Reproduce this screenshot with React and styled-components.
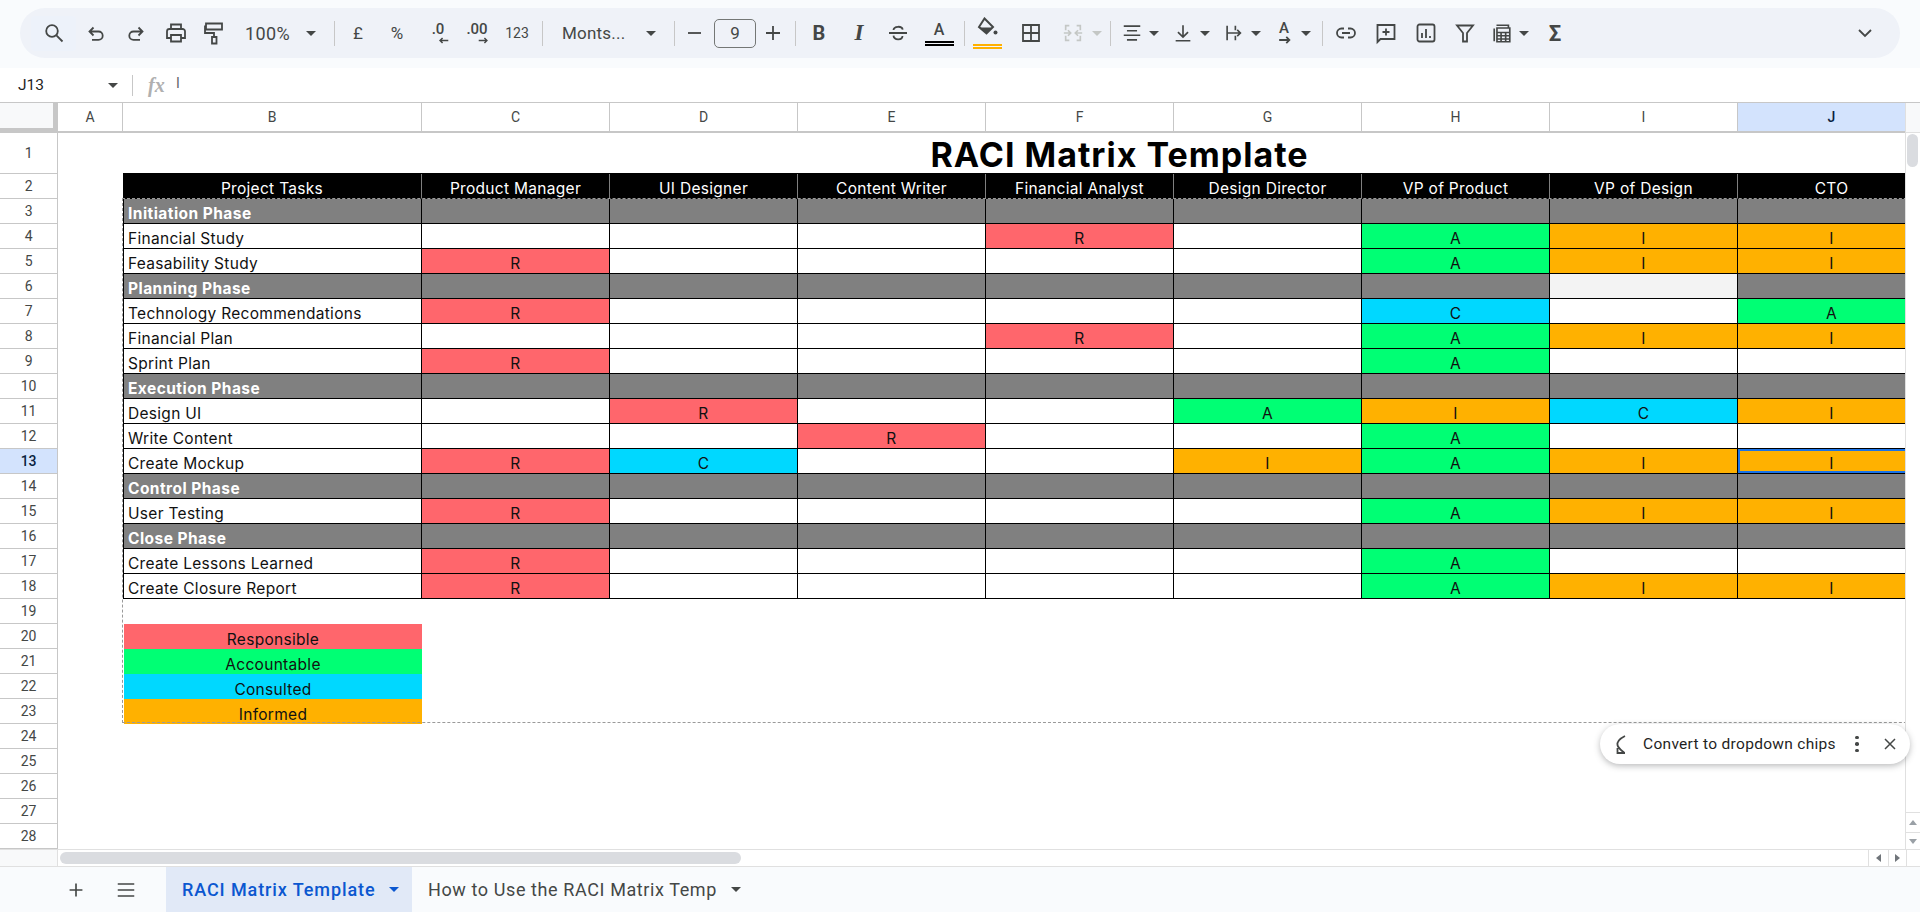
import React from 'react'
import styled, { createGlobalStyle } from 'styled-components'

const GlobalStyle = createGlobalStyle`
  html, body { margin: 0; padding: 0; background: #fff; }
  * { box-sizing: border-box; }
`

const UI_FONT = `Roboto, "Liberation Sans", sans-serif`
const SHEET_FONT = `Inter, "Liberation Sans", sans-serif`
const INK = '#444746'

const Page = styled.div`
  position: relative;
  width: 1920px;
  height: 912px;
  overflow: hidden;
  display: flex;
  flex-direction: column;
  font-family: ${UI_FONT};
  background: #fff;
`

/* toolbar */
const ToolbarBand = styled.div`
  height: 68px;
  flex: none;
  background: #f9fbfd;
  padding: 8px 20px 10px;
`
const Pill = styled.div`
  height: 50px;
  border-radius: 25px;
  background: #eff2f8;
  padding-left: 11px;
  padding-right: 15px;
  display: flex;
  align-items: center;
  color: ${INK};
`
const Tool = styled.div`
  flex: none;
  width: ${p => p.$w}px;
  height: 36px;
  display: flex;
  align-items: center;
  justify-content: center;
  font-size: ${p => p.$size || 15}px;
  font-weight: ${p => p.$weight || 400};
  color: ${INK};
`
const SearchTool = styled(Tool)`
  height: 35px;
  background: #edf2fa;
  border-radius: 4px;
`
const Split = styled.div`
  flex: none;
  width: ${p => p.$w}px;
  padding-left: ${p => p.$pl || 0}px;
  display: flex;
  align-items: center;
  gap: ${p => p.$gap || 6}px;
`
const Select = styled.div`
  flex: none;
  width: ${p => p.$w}px;
  padding: 0 12px 0 ${p => p.$pl}px;
  display: flex;
  align-items: center;
  justify-content: space-between;
  font-size: ${p => p.$size}px;
  letter-spacing: ${p => p.$track || 0}px;
  color: ${INK};
`
const Sep = styled.div`
  flex: none;
  width: ${p => p.$w}px;
  height: 25px;
  display: flex;
  justify-content: center;
  &::after {
    content: '';
    width: 1px;
    height: 25px;
    background: #c7c7c7;
  }
`
const Caret = styled.span`
  flex: none;
  width: 0;
  height: 0;
  border-left: 5px solid transparent;
  border-right: 5px solid transparent;
  border-top: 5px solid ${p => p.$color || INK};
`
const Ico = styled.svg.attrs(p => ({ viewBox: '0 0 24 24', width: p.$s || 24, height: p.$s || 24 }))`
  flex: none;
  display: block;
  fill: none;
  stroke: ${p => p.$color || INK};
  stroke-width: ${p => p.$sw || 1.8};
`
const SizeItem = styled.div`
  flex: none;
  width: 50px;
  padding-left: 6px;
`
const SizeBox = styled.div`
  width: 42px;
  height: 29px;
  border: 1px solid #747775;
  border-radius: 5px;
  display: flex;
  align-items: center;
  justify-content: center;
  font-size: 17px;
  color: ${INK};
`
const Decimal = styled.div`
  display: flex;
  flex-direction: column;
  align-items: flex-end;
  font-size: 15px;
  font-weight: 500;
  line-height: 13px;
  svg {
    margin-right: ${p => p.$nudge || 0}px;
    margin-top: 1px;
  }
`
const BarStack = styled.div`
  display: flex;
  flex-direction: column;
  align-items: center;
  width: 29px;
`
const AGlyph = styled.span`
  font-size: 16px;
  font-weight: 500;
  line-height: 17px;
  height: 17px;
`
const ColorBar = styled.div`
  width: 29px;
  height: 5px;
  margin-top: 3px;
  border-top: 2px solid ${p => p.$color};
  border-bottom: 2px solid ${p => p.$color};
  background: #f4f6fa;
`
const SerifItalic = styled.span`
  font-family: "Liberation Serif", serif;
  font-style: italic;
  font-weight: 700;
  font-size: 23px;
`
const RotateStack = styled.div`
  display: flex;
  flex-direction: column;
  align-items: center;
  width: 22px;
  font-size: 15px;
  font-weight: 500;
  line-height: 13px;
  svg { margin-top: 1px; }
`
const Sigma = styled.span`
  font-size: 22px;
  font-weight: 700;
`
const PushRight = styled.div`
  margin-left: auto;
  width: 40px;
  display: flex;
  justify-content: center;
`

/* formula bar */
const FormulaBar = styled.div`
  height: 35px;
  flex: none;
  border-bottom: 1px solid #c7c7c7;
  display: flex;
  align-items: center;
  padding-left: 18px;
`
const NameBox = styled.div`
  width: 100px;
  display: flex;
  align-items: center;
  justify-content: space-between;
  font-size: 15.5px;
  color: #1f1f1f;
`
const FormulaSep = styled.div`
  width: 1px;
  height: 21px;
  margin-left: 14px;
  background: #c7c7c7;
`
const Fx = styled.span`
  margin-left: 15px;
  width: 28px;
  font-family: "Liberation Serif", serif;
  font-style: italic;
  font-weight: 700;
  font-size: 20px;
  color: #b0b0b0;
`
const FormulaValue = styled.span`
  font-size: 14px;
  color: #5f6368;
  margin-top: -4px;
`

/* sheet */
const SheetBody = styled.div`
  height: 746px;
  flex: none;
  display: flex;
`
const GridPane = styled.div`
  position: relative;
  width: 1905px;
  height: 746px;
  overflow: hidden;
`
const COLUMNS = '58px 65px 299px repeat(8, 188px)'
const ColHeadRow = styled.div`
  display: grid;
  grid-template-columns: ${COLUMNS};
  height: 30px;
`
const Corner = styled.div`
  background: #f8f9fa;
  border-right: 5px solid #c7c7c7;
  border-bottom: 5px solid #c7c7c7;
`
const ColHead = styled.div`
  display: flex;
  align-items: center;
  justify-content: center;
  font-size: 14px;
  padding-bottom: 1px;
  background: ${p => (p.$active ? '#d3e3fd' : '#fff')};
  color: ${p => (p.$active ? '#0b1f3f' : INK)};
  font-weight: ${p => (p.$active ? 500 : 400)};
  border-right: 1px solid #c7c7c7;
  border-bottom: 2px solid #c7c7c7;
`
const Row = styled.div`
  display: grid;
  grid-template-columns: ${COLUMNS};
  height: ${p => p.$h || 25}px;
`
const RowHead = styled.div`
  display: flex;
  align-items: center;
  justify-content: center;
  font-size: 14px;
  letter-spacing: -0.2px;
  background: ${p => (p.$active ? '#d3e3fd' : '#fff')};
  color: ${p => (p.$active ? '#0b1f3f' : INK)};
  font-weight: ${p => (p.$active ? 500 : 400)};
  border-right: 1px solid #c7c7c7;
  border-bottom: 1px solid #c7c7c7;
`
const TitleCell = styled.div`
  grid-column: 3 / -1;
  padding: 3px 0 0 190px;
  text-align: center;
  font-family: ${SHEET_FONT};
  font-weight: 700;
  font-size: 34px;
  line-height: 37px;
  letter-spacing: 1px;
  color: #000;
  border-bottom: 1px solid #000;
`
const BlankA = styled.div``
const Cell = styled.div`
  display: flex;
  align-items: flex-end;
  justify-content: center;
  font-family: ${SHEET_FONT};
  font-size: 15.5px;
  line-height: 19px;
  letter-spacing: 0.3px;
  color: #111;
  background: ${p => p.$fill || '#fff'};
  border-right: 1px solid #000;
  border-bottom: 1px solid #000;
`
const TaskCell = styled(Cell)`
  justify-content: flex-start;
  padding-left: 4px;
  border-left: 1px solid #000;
`
const HeadCell = styled(Cell)`
  background: #000;
  color: #fff;
  border-right: 1px solid #7f7f7f;
`
const PhaseCell = styled(Cell)`
  background: ${p => p.$fill || '#808080'};
`
const PhaseName = styled(TaskCell)`
  background: #808080;
  color: #fff;
  font-weight: 700;
  letter-spacing: 0.45px;
`
const SelectedCell = styled(Cell)`
  box-shadow: inset 0 0 0 2px #1a73e8;
`
const LegendCell = styled.div`
  margin-left: 1px;
  display: flex;
  align-items: flex-end;
  justify-content: center;
  font-family: ${SHEET_FONT};
  font-size: 15.5px;
  line-height: 19px;
  letter-spacing: 0.3px;
  color: #111;
  background: ${p => p.$fill};
`
const CopyAnts = styled.div`
  position: absolute;
  left: 122px;
  top: 95px;
  width: 1900px;
  height: 525px;
  border: 1px dashed #9a9a9a;
  pointer-events: none;
`

/* scrollbars */
const VScroll = styled.div`
  width: 15px;
  border-left: 1px solid #e0e0e0;
  background: #fff;
  display: flex;
  flex-direction: column;
`
const VTop = styled.div`
  height: 30px;
  flex: none;
  background: #f8f9fa;
  border-bottom: 1px solid #e0e0e0;
`
const VThumb = styled.div`
  width: 11px;
  height: 33px;
  margin: 1px 0 0 1px;
  border-radius: 6px;
  background: #dadce0;
`
const VBottom = styled.div`
  margin-top: auto;
`
const ArrowBox = styled.div`
  height: ${p => p.$h}px;
  border-top: 1px solid #e0e0e0;
  display: flex;
  align-items: center;
  justify-content: center;
`
const Tri = styled.span`
  width: 0;
  height: 0;
  border-style: solid;
  border-color: transparent;
  border-width: 4px;
  ${p => p.$dir === 'up' && 'border-bottom: 5px solid #9aa0a6; border-top-width: 0;'}
  ${p => p.$dir === 'down' && 'border-top: 5px solid #9aa0a6; border-bottom-width: 0;'}
  ${p => p.$dir === 'left' && 'border-right: 5px solid #70757a; border-left-width: 0;'}
  ${p => p.$dir === 'right' && 'border-left: 5px solid #70757a; border-right-width: 0;'}
`
const HScroll = styled.div`
  height: 17px;
  flex: none;
  border-top: 1px solid #e0e0e0;
  display: flex;
`
const HLeft = styled.div`
  width: 58px;
  flex: none;
  background: #f8f9fa;
  border-right: 1px solid #e0e0e0;
`
const HThumb = styled.div`
  width: 681px;
  height: 12px;
  margin: 2px 0 0 2px;
  border-radius: 6px;
  background: #dadce0;
`
const HArrow = styled.div`
  width: ${p => p.$w}px;
  flex: none;
  border-left: 1px solid #e0e0e0;
  display: flex;
  align-items: center;
  justify-content: center;
  margin-left: ${p => (p.$first ? 'auto' : 0)};
`

/* sheet tabs */
const TabBar = styled.div`
  flex: 1;
  border-top: 1px solid #e0e0e0;
  background: #f9fbfd;
  display: flex;
  align-items: stretch;
  padding-left: 60px;
`
const TabIcon = styled.div`
  width: ${p => p.$w}px;
  margin-right: ${p => p.$mr || 0}px;
  flex: none;
  display: flex;
  align-items: center;
  justify-content: center;
`
const Tab = styled.div`
  width: ${p => p.$w}px;
  flex: none;
  padding-left: 16px;
  display: flex;
  align-items: center;
  gap: 14px;
  font-size: 18px;
  font-weight: ${p => (p.$active ? 500 : 400)};
  letter-spacing: ${p => (p.$active ? 0.9 : 0.6)}px;
  color: ${p => (p.$active ? '#0b57d0' : INK)};
  background: ${p => (p.$active ? '#e1e9f7' : 'transparent')};
`

/* popup chip */
const Toast = styled.div`
  position: absolute;
  left: 1600px;
  top: 724px;
  width: 310px;
  height: 40px;
  border-radius: 20px;
  background: #fff;
  box-shadow: 0 2px 6px rgba(60, 64, 67, 0.35);
  display: flex;
  align-items: center;
  padding-left: 9px;
  font-size: 15.5px;
  color: #1f1f1f;
`
const ToastText = styled.span`
  flex: none;
  margin-left: 10px;
  width: 212px;
  letter-spacing: 0.3px;
  white-space: nowrap;
`
const Dots = styled.div`
  flex: none;
  display: flex;
  flex-direction: column;
  gap: 3px;
  width: 4px;
  span {
    width: 3.5px;
    height: 3.5px;
    border-radius: 50%;
    background: ${INK};
  }
`
const ToastClose = styled.div`
  flex: none;
  margin-left: 21px;
  width: 20px;
`

const icons = {
  search: <><circle cx="10" cy="10" r="5.8" /><path d="M14.4 14.4 20.5 20.5" /></>,
  undo: <path d="M9.5 6.5 5.5 10.5l4 4M5.5 10.5h9a4.2 4.2 0 0 1 0 8.4H8" />,
  redo: <path d="M14.5 6.5l4 4-4 4M18.5 10.5h-9a4.2 4.2 0 0 0 0 8.4H16" />,
  print: <path d="M7 8V3.5h10V8M7 17H3v-6.5A2.5 2.5 0 0 1 5.5 8h13a2.5 2.5 0 0 1 2.5 2.5V17h-4M7 14h10v6.5H7z" />,
  paint: <path d="M4 2.5h16v6H4zM4 5.5H3V12h9v4M10 16h4.5v6.5H10z" />,
  minus: <path d="M6 12h13" />,
  plus: <path d="M12 5v14M5 12h14" />,
  strike: <path d="M3 12h18M7.5 9c.3-4 8.5-4.5 9.2-.3M16.5 15c-.2 4.5-8.5 4.5-9-.3" />,
  borders: <path d="M4 4h16v16H4zM12 4v16M4 12h16" />,
  merge: <path d="M4 9V4h4M4 15v5h4M20 9V4h-4M20 15v5h-4M2 12h7M6.5 9l3 3-3 3M22 12h-7M17.5 9l-3 3 3 3" />,
  align: <path d="M3 4.5h18M6.5 9.5h11M3 14.5h18M6.5 19.5h11" />,
  menu: <path d="M3 5.5h18M3 12h18M3 18.5h18" />,
  valign: <path d="M12 3.5V16M6.5 11l5.5 5.5 5.5-5.5M4 20.5h16" />,
  wrap: <path d="M4.5 4v16M5 12h14M15.5 8.5 19 12l-3.5 3.5M13.5 4v5M13.5 15v5" />,
  link: <path d="M10 7.5H7.5a4.5 4.5 0 0 0 0 9H10M14 7.5h2.5a4.5 4.5 0 0 1 0 9H14M8 12h8" />,
  comment: <path d="M3.5 21V4h17v14H6.5zM12 7.5v7M8.5 11h7" />,
  chart: <path d="M5.5 3.5h13a2 2 0 0 1 2 2v13a2 2 0 0 1-2 2h-13a2 2 0 0 1-2-2v-13a2 2 0 0 1 2-2zM8 12v5M12 8v9M16 15v2" />,
  filter: <path d="M4 4.5h16l-6 7.5v8.5h-4V12z" />,
  calc: <path d="M3.5 7v14M6 3.5h13v3M6.5 6.5h14v15h-14zM6.5 11.5h14M6.5 15h14M6.5 18.5h14M11 11.5v10M16 11.5v10" />,
  chevron: <path d="M6 9l6 6 6-6" />,
  close: <path d="M6 6l12 12M18 6 6 18" />,
  convert: <path d="M16 4C11 6.5 8 10 8.5 13C9 16 12 18 15 20.5M8.5 16v5H16" />,
}

const Icon = ({ name, ...rest }) => <Ico {...rest}>{icons[name]}</Ico>

const BucketIcon = () => (
  <svg viewBox="0 0 24 24" width="24" height="24">
    <path d="M9.5 1.5 18 10l-6.5 6.5L4 10z" fill="none" stroke={INK} strokeWidth="2" />
    <path d="M4.5 10.5h13l-6 6z" fill={INK} />
    <circle cx="20.5" cy="15.5" r="2" fill={INK} />
  </svg>
)

const ArrowLeft = () => (
  <svg viewBox="0 0 14 9" width="10" height="7" fill="none" stroke={INK} strokeWidth="2.2">
    <path d="M13 4.5H2M5 1 1.5 4.5 5 8" />
  </svg>
)
const ArrowRight = ({ width = 10, height = 7 }) => (
  <svg viewBox="0 0 14 9" width={width} height={height} fill="none" stroke={INK} strokeWidth="2">
    <path d="M1 4.5h11M9 1l3.5 3.5L9 8" />
  </svg>
)

const columnLetters = ['B', 'C', 'D', 'E', 'F', 'G', 'H', 'I', 'J']
const roles = ['Product Manager', 'UI Designer', 'Content Writer', 'Financial Analyst', 'Design Director', 'VP of Product', 'VP of Design', 'CTO']
const fills = { R: '#ff666c', A: '#00ff74', C: '#00d8ff', I: '#ffb100' }
const legend = [['Responsible', 'R'], ['Accountable', 'A'], ['Consulted', 'C'], ['Informed', 'I']]

// one row per sheet row from 3 to 18, cells hold C..J
const rows = [
  { phase: 'Initiation Phase' },
  { task: 'Financial Study', cells: '   R AII' },
  { task: 'Feasability Study', cells: 'R    AII' },
  { phase: 'Planning Phase', light: 6 },
  { task: 'Technology Recommendations', cells: 'R    C A' },
  { task: 'Financial Plan', cells: '   R AII' },
  { task: 'Sprint Plan', cells: 'R    A  ' },
  { phase: 'Execution Phase' },
  { task: 'Design UI', cells: ' R  AICI' },
  { task: 'Write Content', cells: '  R  A  ' },
  { task: 'Create Mockup', cells: 'RC  IAII', selected: 7 },
  { phase: 'Control Phase' },
  { task: 'User Testing', cells: 'R    AII' },
  { phase: 'Close Phase' },
  { task: 'Create Lessons Learned', cells: 'R    A  ' },
  { task: 'Create Closure Report', cells: 'R    AII' },
]

function Toolbar() {
  return (
    <ToolbarBand>
      <Pill>
        <SearchTool $w={45}><Icon name="search" /></SearchTool>
        <Tool $w={40}><Icon name="undo" /></Tool>
        <Tool $w={40}><Icon name="redo" /></Tool>
        <Tool $w={40}><Icon name="print" /></Tool>
        <Tool $w={36}><Icon name="paint" /></Tool>
        <Select $w={96} $pl={13} $size={18} $track={0.4}>100%<Caret /></Select>
        <Sep $w={12} />
        <Tool $w={36} $size={17}>£</Tool>
        <Tool $w={42} $size={17}>%</Tool>
        <Tool $w={40}><Decimal $nudge={-5}>.0<ArrowLeft /></Decimal></Tool>
        <Tool $w={38}><Decimal>.00<ArrowRight /></Decimal></Tool>
        <Tool $w={42} $size={14}>123</Tool>
        <Sep $w={8} />
        <Select $w={122} $pl={16} $size={17} $track={0.2}>Monts...<Caret /></Select>
        <Sep $w={12} />
        <Tool $w={28}><Icon name="minus" /></Tool>
        <SizeItem><SizeBox>9</SizeBox></SizeItem>
        <Tool $w={30}><Icon name="plus" /></Tool>
        <Sep $w={14} />
        <Tool $w={34} $size={20} $weight={700}>B</Tool>
        <Tool $w={46}><SerifItalic>I</SerifItalic></Tool>
        <Tool $w={32}><Icon name="strike" /></Tool>
        <Tool $w={50}>
          <BarStack><AGlyph>A</AGlyph><ColorBar $color="#000" /></BarStack>
        </Tool>
        <Sep $w={1} />
        <Tool $w={44}>
          <BarStack><BucketIcon /><ColorBar $color="#ffb100" /></BarStack>
        </Tool>
        <Tool $w={44}><Icon name="borders" /></Tool>
        <Split $w={48} $pl={9} $gap={8}>
          <Icon name="merge" $color="#c4c7c5" $s={22} />
          <Caret $color="#c4c7c5" />
        </Split>
        <Sep $w={18} />
        <Split $w={53} $pl={2}><Icon name="align" $s={22} /><Caret /></Split>
        <Split $w={51}><Icon name="valign" $s={22} /><Caret /></Split>
        <Split $w={50}><Icon name="wrap" $s={22} /><Caret /></Split>
        <Split $w={49}>
          <RotateStack>A<ArrowRight width={15} height={8} /></RotateStack>
          <Caret />
        </Split>
        <Sep $w={1} />
        <Tool $w={46}><Icon name="link" /></Tool>
        <Tool $w={34}><Icon name="comment" /></Tool>
        <Tool $w={46}><Icon name="chart" /></Tool>
        <Tool $w={32}><Icon name="filter" /></Tool>
        <Split $w={52} $pl={10}><Icon name="calc" $s={22} /><Caret /></Split>
        <Tool $w={44}><Sigma>Σ</Sigma></Tool>
        <PushRight><Icon name="chevron" /></PushRight>
      </Pill>
    </ToolbarBand>
  )
}

function MatrixRow({ num, row }) {
  if (row.phase) {
    return (
      <Row>
        <RowHead>{num}</RowHead>
        <BlankA />
        <PhaseName>{row.phase}</PhaseName>
        {roles.map((r, i) => <PhaseCell key={r} $fill={row.light === i ? '#f3f3f3' : undefined} />)}
      </Row>
    )
  }
  return (
    <Row>
      <RowHead $active={row.selected !== undefined}>{num}</RowHead>
      <BlankA />
      <TaskCell>{row.task}</TaskCell>
      {row.cells.split('').map((c, i) => {
        const Comp = row.selected === i ? SelectedCell : Cell
        return <Comp key={i} $fill={fills[c]}>{c.trim()}</Comp>
      })}
    </Row>
  )
}

export default function App() {
  const tail = Array.from({ length: 10 }, (_, i) => i + 19)
  return (
    <Page>
      <GlobalStyle />
      <Toolbar />
      <FormulaBar>
        <NameBox>J13<Caret /></NameBox>
        <FormulaSep />
        <Fx>fx</Fx>
        <FormulaValue>I</FormulaValue>
      </FormulaBar>
      <SheetBody>
        <GridPane>
          <ColHeadRow>
            <Corner />
            <ColHead>A</ColHead>
            {columnLetters.map(l => <ColHead key={l} $active={l === 'J'}>{l}</ColHead>)}
          </ColHeadRow>
          <Row $h={41}>
            <RowHead>1</RowHead>
            <BlankA />
            <TitleCell>RACI Matrix Template</TitleCell>
          </Row>
          <Row>
            <RowHead>2</RowHead>
            <BlankA />
            <HeadCell>Project Tasks</HeadCell>
            {roles.map(r => <HeadCell key={r}>{r}</HeadCell>)}
          </Row>
          {rows.map((row, i) => <MatrixRow key={i} num={i + 3} row={row} />)}
          {tail.map(n => {
            const item = legend[n - 20]
            return (
              <Row key={n}>
                <RowHead>{n}</RowHead>
                <BlankA />
                {item && <LegendCell $fill={fills[item[1]]}>{item[0]}</LegendCell>}
              </Row>
            )
          })}
          <CopyAnts />
        </GridPane>
        <VScroll>
          <VTop />
          <VThumb />
          <VBottom>
            <ArrowBox $h={20}><Tri $dir="up" /></ArrowBox>
            <ArrowBox $h={17}><Tri $dir="down" /></ArrowBox>
          </VBottom>
        </VScroll>
      </SheetBody>
      <HScroll>
        <HLeft />
        <HThumb />
        <HArrow $w={20} $first><Tri $dir="left" /></HArrow>
        <HArrow $w={18}><Tri $dir="right" /></HArrow>
        <HArrow $w={14} />
      </HScroll>
      <TabBar>
        <TabIcon $w={32}><Icon name="plus" $s={22} /></TabIcon>
        <TabIcon $w={68} $mr={6}><Icon name="menu" $s={22} /></TabIcon>
        <Tab $active $w={246}>RACI Matrix Template<Caret $color="#0b57d0" /></Tab>
        <Tab $w={340}>How to Use the RACI Matrix Temp<Caret /></Tab>
      </TabBar>
      <Toast>
        <Icon name="convert" />
        <ToastText>Convert to dropdown chips</ToastText>
        <Dots><span /><span /><span /></Dots>
        <ToastClose><Icon name="close" $s={20} /></ToastClose>
      </Toast>
    </Page>
  )
}
